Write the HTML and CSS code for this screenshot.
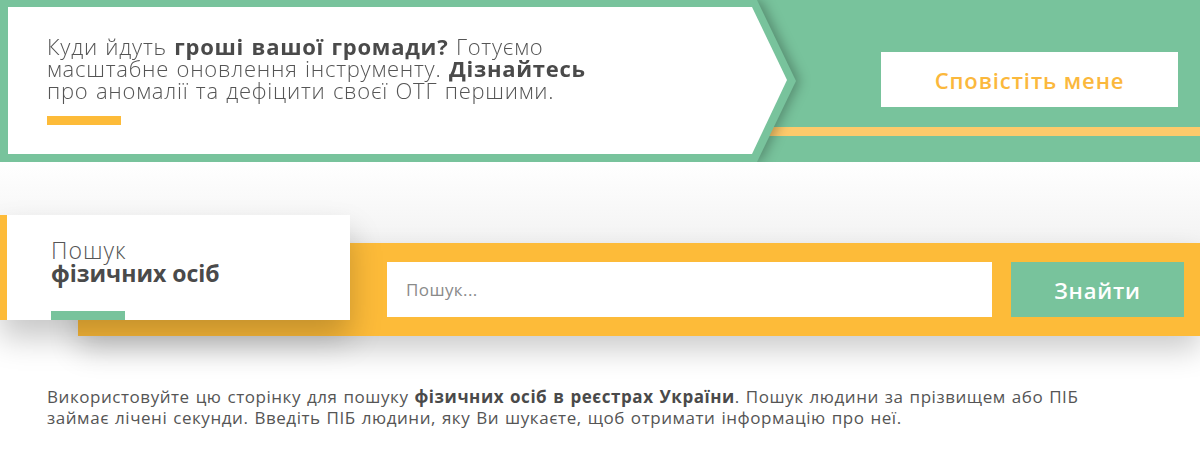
FILE: index.html
```html
<!DOCTYPE html>
<html lang="uk">
<head>
    <meta charset="UTF-8">
    <meta name="viewport" content="width=device-width, initial-scale=1">
    <title>Пошук фізичних осіб</title>
    <link rel="stylesheet" href="styles.css">
</head>

<body>

<!-- Promo banner -->
<header class="promo">
    <div class="promo-arrow">
        <div class="promo-frame">
            <div class="promo-box">
                <p class="promo-text">Куди йдуть <b>гроші вашої громади?</b> Готуємо масштабне оновлення інструменту. <b>Дізнайтесь</b> про аномалії та дефіцити своєї ОТГ першими.</p>
                <span class="accent accent-yellow"></span>
            </div>
        </div>
    </div>
    <div class="promo-side">
        <button type="button" class="notify-btn">Сповістіть мене</button>
        <div class="promo-line"></div>
    </div>
</header>

<!-- Search block -->
<section class="search">
    <div class="search-card">
        <h1 class="search-title"><span class="light">Пошук</span><br><b>фізичних осіб</b></h1>
        <span class="accent accent-green"></span>
    </div>
    <form class="search-bar" onsubmit="return false">
        <input type="text" class="search-input" placeholder="Пошук...">
        <button type="submit" class="search-btn">Знайти</button>
    </form>
</section>

<p class="intro">Використовуйте цю сторінку для пошуку <b>фізичних осіб в реєстрах України</b>. Пошук людини за прізвищем або ПІБ займає лічені секунди. Введіть ПІБ людини, яку Ви шукаєте, щоб отримати інформацію про неї.</p>

</body>
</html>
```

FILE: styles.css
```css
body {
    margin: 0;
    font-family: "Open Sans", "Noto Sans", sans-serif;
    color: #555;
    background-color: #fff;
}
b {
    font-weight: 700;
    color: #4a4a4a;
}

/* promo banner */
.promo {
    display: flex;
    height: 162px;
    background-color: #78c39c;
    overflow: hidden;
}
.promo-arrow {
    width: 796px;
    flex-shrink: 0;
    position: relative;
    z-index: 1;
    filter: drop-shadow(4px 0 6px rgba(0, 0, 0, 0.28));
}
.promo-frame {
    height: 100%;
    box-sizing: border-box;
    padding: 7px 0 8px 8px;
    background-color: #78c39c;
    clip-path: polygon(0 0, 757px 0, 796px 81px, 757px 162px, 0 162px);
}
.promo-box {
    height: 100%;
    box-sizing: border-box;
    padding: 28px 0 0 39px;
    background-color: #fff;
    clip-path: polygon(0 0, 744px 0, 779px 73px, 744px 147px, 0 147px);
}
.promo-text {
    margin: 0;
    max-width: 575px;
    font-size: 22px;
    font-weight: 300;
    line-height: 22px;
    letter-spacing: 0.75px;
    word-spacing: 1px;
    color: #555;
}
.accent {
    display: block;
    width: 74px;
    height: 9px;
}
.accent-yellow {
    margin-top: 15px;
    background-color: #fdbb39;
}
.accent-green {
    background-color: #78c39c;
}
.promo-side {
    flex: 1;
    padding-top: 52px;
}
.notify-btn {
    display: block;
    width: 297px;
    height: 55px;
    margin-left: 85px;
    border: 0;
    background-color: #fff;
    font-family: inherit;
    font-size: 22px;
    font-weight: 600;
    letter-spacing: 0.9px;
    color: #fbb83c;
    cursor: pointer;
}
.promo-line {
    height: 9px;
    margin: 20px 0 0 -30px;
    background-color: #fdca6b;
}

/* search block */
.search {
    display: flex;
    padding-top: 53px;
    background: linear-gradient(#fff, #f3f3f3 81px, #fff 81px);
}
.search-card {
    position: relative;
    z-index: 1;
    width: 299px;
    height: 105px;
    flex-shrink: 0;
    padding-left: 44px;
    border-left: 7px solid #fdbb39;
    background-color: #fff;
    box-shadow: 0 18px 30px rgba(0, 0, 0, 0.22);
    display: flex;
    flex-direction: column;
    justify-content: space-between;
}
.search-title {
    margin: 24px 0 0;
    font-size: 23px;
    font-weight: 300;
    line-height: 23px;
}
.search-title .light {
    letter-spacing: 1px;
}
.search-title b {
    font-weight: 700;
}
.search-bar {
    flex: 1;
    display: flex;
    gap: 19px;
    height: 93px;
    box-sizing: border-box;
    margin: 28px 0 0 -272px;
    padding: 19px 16px 19px 309px;
    background-color: #fdbb39;
    box-shadow: 0 14px 28px rgba(0, 0, 0, 0.2);
}
.search-input {
    flex: 1;
    min-width: 0;
    border: 0;
    padding: 0 19px;
    font-family: inherit;
    font-size: 17px;
    letter-spacing: 0.4px;
    color: #555;
    outline: none;
}
.search-input::placeholder {
    color: #8a8a8a;
}
.search-btn {
    width: 173px;
    border: 0;
    background-color: #78c39c;
    font-family: inherit;
    font-size: 22px;
    font-weight: 600;
    letter-spacing: 0.8px;
    color: #fff;
    cursor: pointer;
}

.intro {
    max-width: 1060px;
    margin: 50px 47px 0;
    font-size: 17px;
    line-height: 21px;
    letter-spacing: 0.55px;
    word-spacing: 1px;
}
```
